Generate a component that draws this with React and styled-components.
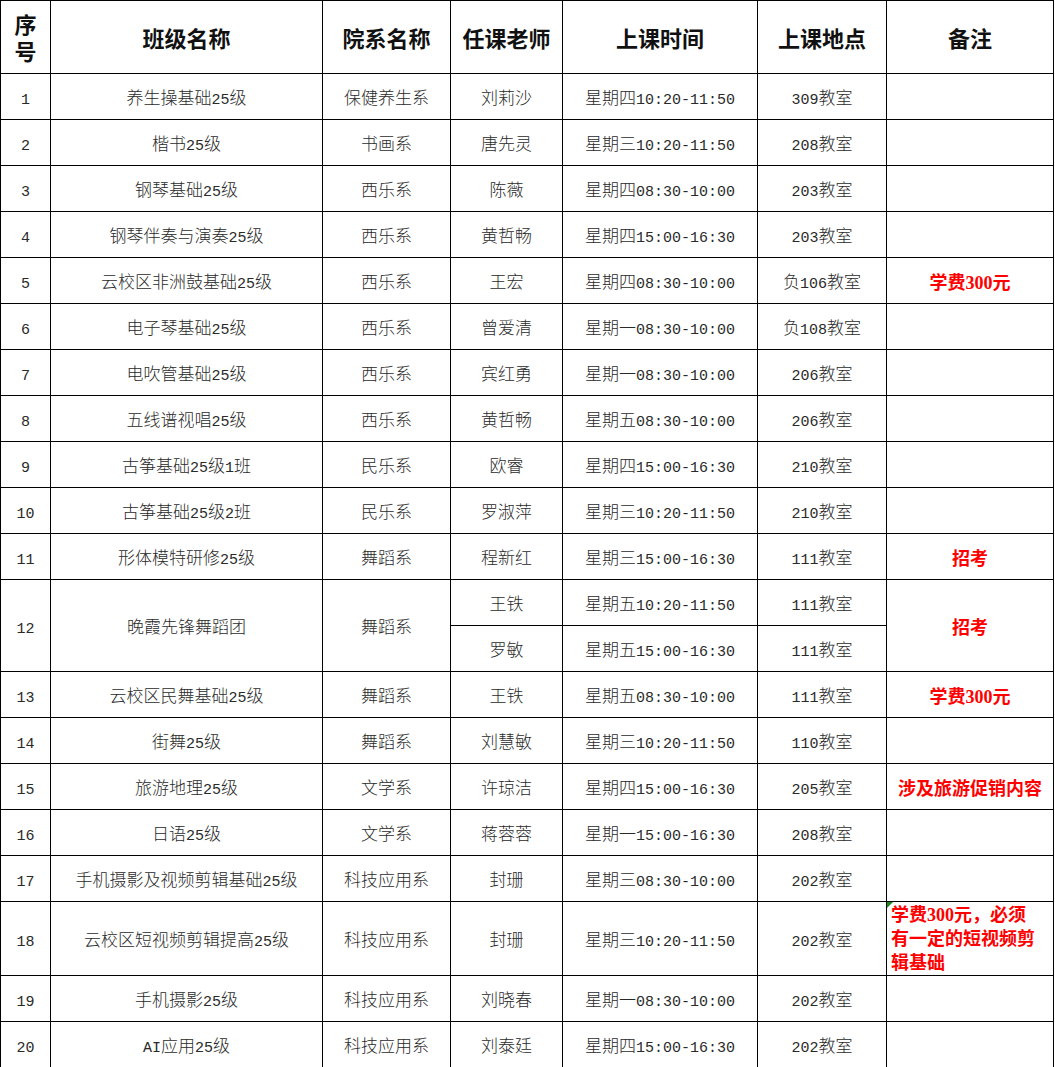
import React from "react";
import styled, { createGlobalStyle } from "styled-components";

const GlobalStyle = createGlobalStyle`
  html, body {
    margin: 0;
    padding: 0;
    background: #fff;
    overflow: hidden;
  }
  body {
    font-family: "Noto Sans CJK SC", sans-serif;
  }
`;

const rows = [
  { no: 1, name: "养生操基础25级", dept: "保健养生系", slots: [["刘莉沙", "星期四10:20-11:50", "309教室"]] },
  { no: 2, name: "楷书25级", dept: "书画系", slots: [["唐先灵", "星期三10:20-11:50", "208教室"]] },
  { no: 3, name: "钢琴基础25级", dept: "西乐系", slots: [["陈薇", "星期四08:30-10:00", "203教室"]] },
  { no: 4, name: "钢琴伴奏与演奏25级", dept: "西乐系", slots: [["黄哲畅", "星期四15:00-16:30", "203教室"]] },
  { no: 5, name: "云校区非洲鼓基础25级", dept: "西乐系", slots: [["王宏", "星期四08:30-10:00", "负106教室"]], note: "学费300元" },
  { no: 6, name: "电子琴基础25级", dept: "西乐系", slots: [["曾爱清", "星期一08:30-10:00", "负108教室"]] },
  { no: 7, name: "电吹管基础25级", dept: "西乐系", slots: [["宾红勇", "星期一08:30-10:00", "206教室"]] },
  { no: 8, name: "五线谱视唱25级", dept: "西乐系", slots: [["黄哲畅", "星期五08:30-10:00", "206教室"]] },
  { no: 9, name: "古筝基础25级1班", dept: "民乐系", slots: [["欧睿", "星期四15:00-16:30", "210教室"]] },
  { no: 10, name: "古筝基础25级2班", dept: "民乐系", slots: [["罗淑萍", "星期三10:20-11:50", "210教室"]] },
  { no: 11, name: "形体模特研修25级", dept: "舞蹈系", slots: [["程新红", "星期三15:00-16:30", "111教室"]], note: "招考" },
  {
    no: 12,
    name: "晚霞先锋舞蹈团",
    dept: "舞蹈系",
    slots: [
      ["王铁", "星期五10:20-11:50", "111教室"],
      ["罗敏", "星期五15:00-16:30", "111教室"],
    ],
    note: "招考",
  },
  { no: 13, name: "云校区民舞基础25级", dept: "舞蹈系", slots: [["王铁", "星期五08:30-10:00", "111教室"]], note: "学费300元" },
  { no: 14, name: "街舞25级", dept: "舞蹈系", slots: [["刘慧敏", "星期三10:20-11:50", "110教室"]] },
  { no: 15, name: "旅游地理25级", dept: "文学系", slots: [["许琼洁", "星期四15:00-16:30", "205教室"]], note: "涉及旅游促销内容" },
  { no: 16, name: "日语25级", dept: "文学系", slots: [["蒋蓉蓉", "星期一15:00-16:30", "208教室"]] },
  { no: 17, name: "手机摄影及视频剪辑基础25级", dept: "科技应用系", slots: [["封珊", "星期三08:30-10:00", "202教室"]] },
  {
    no: 18,
    name: "云校区短视频剪辑提高25级",
    dept: "科技应用系",
    slots: [["封珊", "星期三10:20-11:50", "202教室"]],
    tall: true,
    longNote: ["学费300元，必须", "有一定的短视频剪", "辑基础"],
  },
  { no: 19, name: "手机摄影25级", dept: "科技应用系", slots: [["刘晓春", "星期一08:30-10:00", "202教室"]] },
  { no: 20, name: "AI应用25级", dept: "科技应用系", slots: [["刘泰廷", "星期四15:00-16:30", "202教室"]] },
];

const Frame = styled.div`
  width: 1053px;
  border-right: 1px solid #000;
`;

const Sheet = styled.table`
  border-collapse: collapse;
  table-layout: fixed;
  width: 100%;
`;

const HeadCell = styled.th`
  height: 72px;
  padding: 0;
  border: 1px solid #000;
  font-family: "Noto Sans CJK SC", sans-serif;
  font-size: 22px;
  font-weight: 700;
  line-height: 28px;
  color: #111;
  text-align: center;
  vertical-align: middle;
  &:last-child {
    border-right: 0;
  }
`;

const StackedChar = styled.div`
  height: 27px;
  line-height: 27px;
`;

const Row = styled.tr`
  height: ${(p) => (p.$tall ? 73 : 46)}px;
`;

const Cell = styled.td`
  padding: 0;
  border: 1px solid #000;
  font-family: "Noto Sans CJK SC", sans-serif;
  font-size: 17px;
  font-weight: 300;
  color: #2a2a2a;
  text-align: center;
  vertical-align: middle;
  white-space: nowrap;
`;

const NoteCell = styled(Cell)`
  font-family: "Liberation Serif", "Noto Sans CJK SC", serif;
  font-size: 18px;
  font-weight: 700;
  color: #ff0000;
  border-right: 0;
`;

const LongNoteCell = styled(NoteCell)`
  position: relative;
  text-align: left;
  vertical-align: top;
  padding: 1px 0 0 4px;
  line-height: 24px;
`;

const CommentMark = styled.span`
  position: absolute;
  left: 0;
  top: 0;
  width: 0;
  height: 0;
  border-top: 6px solid #1a8a1a;
  border-right: 6px solid transparent;
`;

const Latin = styled.span`
  font-family: "Liberation Mono", monospace;
  font-size: 15px;
  font-weight: 400;
`;

const Mixed = ({ text }) =>
  String(text)
    .split(/([\x00-\x7F]+)/)
    .filter(Boolean)
    .map((part, i) =>
      /^[\x00-\x7F]+$/.test(part) ? <Latin key={i}>{part}</Latin> : <React.Fragment key={i}>{part}</React.Fragment>
    );

const ScheduleRows = ({ r }) => {
  const span = r.slots.length;
  return r.slots.map((slot, i) => (
    <Row key={i} $tall={r.tall}>
      {i === 0 && (
        <>
          <Cell rowSpan={span}>
            <Mixed text={r.no} />
          </Cell>
          <Cell rowSpan={span}>
            <Mixed text={r.name} />
          </Cell>
          <Cell rowSpan={span}>{r.dept}</Cell>
        </>
      )}
      <Cell>{slot[0]}</Cell>
      <Cell>
        <Mixed text={slot[1]} />
      </Cell>
      <Cell>
        <Mixed text={slot[2]} />
      </Cell>
      {i === 0 &&
        (r.longNote ? (
          <LongNoteCell rowSpan={span}>
            <CommentMark />
            {r.longNote.map((line, j) => (
              <div key={j}>{line}</div>
            ))}
          </LongNoteCell>
        ) : (
          <NoteCell rowSpan={span}>{r.note || ""}</NoteCell>
        ))}
    </Row>
  ));
};

export default function App() {
  return (
    <>
      <GlobalStyle />
      <Frame>
        <Sheet>
          <colgroup>
            <col style={{ width: 50 }} />
            <col style={{ width: 272 }} />
            <col style={{ width: 128 }} />
            <col style={{ width: 112 }} />
            <col style={{ width: 195 }} />
            <col style={{ width: 129 }} />
            <col />
          </colgroup>
          <thead>
            <tr>
              <HeadCell>
                <StackedChar>序</StackedChar>
                <StackedChar>号</StackedChar>
              </HeadCell>
              <HeadCell>班级名称</HeadCell>
              <HeadCell>院系名称</HeadCell>
              <HeadCell>任课老师</HeadCell>
              <HeadCell>上课时间</HeadCell>
              <HeadCell>上课地点</HeadCell>
              <HeadCell>备注</HeadCell>
            </tr>
          </thead>
          <tbody>
            {rows.map((r) => (
              <ScheduleRows key={r.no} r={r} />
            ))}
          </tbody>
        </Sheet>
      </Frame>
    </>
  );
}
